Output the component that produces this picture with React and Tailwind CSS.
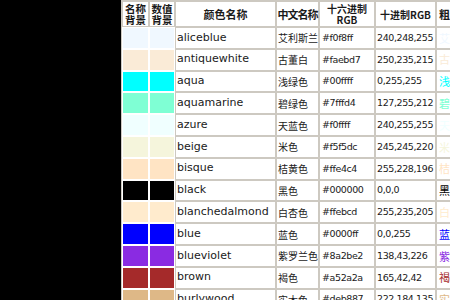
import React from 'react'

// --- color table data ---
const colors = [
    { name: 'aliceblue', cn: '艾利斯兰', hex: '#f0f8ff', rgb: '240,248,255' },
    { name: 'antiquewhite', cn: '古董白', hex: '#faebd7', rgb: '250,235,215' },
    { name: 'aqua', cn: '浅绿色', hex: '#00ffff', rgb: '0,255,255' },
    { name: 'aquamarine', cn: '碧绿色', hex: '#7fffd4', rgb: '127,255,212' },
    { name: 'azure', cn: '天蓝色', hex: '#f0ffff', rgb: '240,255,255' },
    { name: 'beige', cn: '米色', hex: '#f5f5dc', rgb: '245,245,220' },
    { name: 'bisque', cn: '桔黄色', hex: '#ffe4c4', rgb: '255,228,196' },
    { name: 'black', cn: '黑色', hex: '#000000', rgb: '0,0,0' },
    { name: 'blanchedalmond', cn: '白杏色', hex: '#ffebcd', rgb: '255,235,205' },
    { name: 'blue', cn: '蓝色', hex: '#0000ff', rgb: '0,0,255' },
    { name: 'blueviolet', cn: '紫罗兰色', hex: '#8a2be2', rgb: '138,43,226' },
    { name: 'brown', cn: '褐色', hex: '#a52a2a', rgb: '165,42,42' },
    { name: 'burlywood', cn: '实木色', hex: '#deb887', rgb: '222,184,135' },
];

const cjk = "font-['Noto_Sans_CJK_SC',sans-serif]";
const latin = "font-['DejaVu_Sans','Noto_Sans_CJK_SC',sans-serif]";

function App() {
    return (
        <div className="flex w-[450px] h-[300px] overflow-hidden bg-black">
            <div className="w-[121px] shrink-0 bg-black" />

            <div className="flex-1 overflow-hidden bg-[#cdc9c1] pl-[2px] pt-[2px]">
                <div className="grid grid-cols-[25px_24px_99px_41px_54px_59px_60px] grid-rows-[24px] auto-rows-[19.8px] gap-[2px] text-[#1a1a1a]">
                    {/* header */}
                    <div className={`bg-white flex items-center justify-center text-center font-bold text-[10.5px] leading-[11px] ${cjk}`}>
                        <span>名称<br />背景</span>
                    </div>
                    <div className={`bg-white flex items-center justify-center text-center font-bold text-[10.5px] leading-[11px] ${cjk}`}>
                        <span>数值<br />背景</span>
                    </div>
                    <div className={`bg-white flex items-center justify-center font-bold text-[11px] ${cjk}`}>颜色名称</div>
                    <div className={`bg-white flex items-center justify-center font-bold text-[11px] tracking-[-1px] whitespace-nowrap ${cjk}`}>中文名称</div>
                    <div className={`bg-white flex items-center justify-center text-center font-bold text-[10px] leading-[11px] whitespace-nowrap ${cjk}`}>
                        <span>十六进制<br />RGB</span>
                    </div>
                    <div className={`bg-white flex items-center justify-center font-bold text-[10px] whitespace-nowrap ${cjk}`}>十进制RGB</div>
                    <div className={`bg-white flex items-center pl-[2px] font-bold text-[11px] whitespace-nowrap overflow-hidden ${cjk}`}>粗体显示</div>

                    {/* rows */}
                    {colors.map(c => (
                        <React.Fragment key={c.name}>
                            <div className="shadow-[0_0_0_1px_#ffffff]" style={{ backgroundColor: c.hex }} />
                            <div className="shadow-[0_0_0_1px_#ffffff]" style={{ backgroundColor: c.hex }} />
                            <div className={`bg-white flex items-center pl-px text-[11px] whitespace-nowrap overflow-hidden ${latin}`}>{c.name}</div>
                            <div className={`bg-white flex items-center pl-px text-[10px] whitespace-nowrap overflow-hidden ${cjk}`}>{c.cn}</div>
                            <div className={`bg-white flex items-center pl-[2px] text-[9.5px] tracking-[-0.4px] whitespace-nowrap overflow-hidden ${latin}`}>{c.hex}</div>
                            <div className={`bg-white flex items-center pl-px text-[9.5px] tracking-[-0.4px] whitespace-nowrap overflow-hidden ${latin}`}>{c.rgb}</div>
                            <div className={`bg-white flex items-center pl-[2px] text-[11px] whitespace-nowrap overflow-hidden ${cjk}`} style={{ color: c.hex }}>{c.cn}</div>
                        </React.Fragment>
                    ))}
                </div>
            </div>
        </div>
    );
}

export default App
